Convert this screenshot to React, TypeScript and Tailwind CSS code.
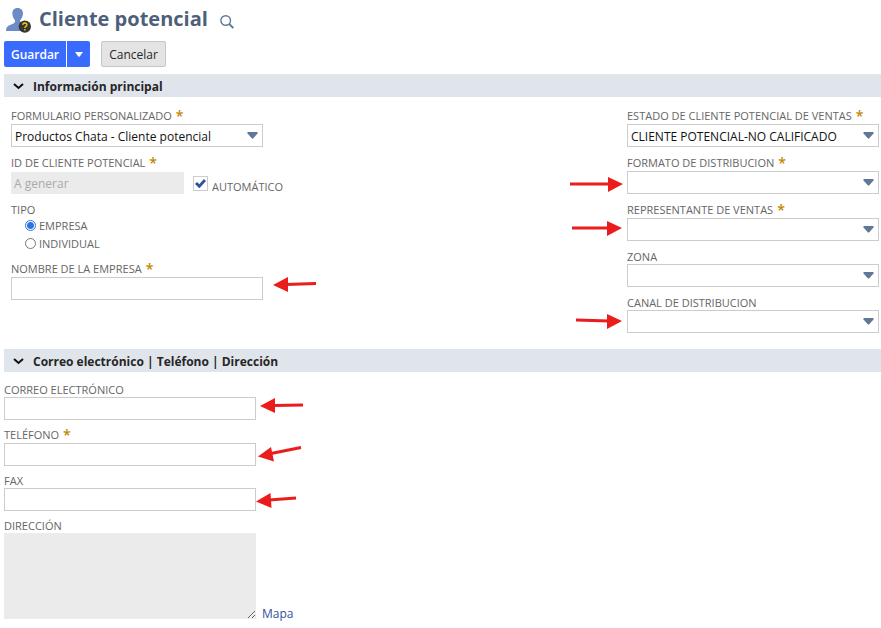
import { useState, type ReactNode } from "react";

type ArrowProps = { className: string; width: number; height: number; line: string; head: string };

function Arrow({ className, width, height, line, head }: ArrowProps) {
  return (
    <svg className={"pointer-events-none absolute " + className} width={width} height={height} viewBox={`0 0 ${width} ${height}`} aria-hidden="true">
      <path d={line} stroke="#ea1c1c" strokeWidth="3" fill="none" />
      <path d={head} fill="#ea1c1c" />
    </svg>
  );
}

function Label({ id, required, children }: { id?: string; required?: boolean; children: ReactNode }) {
  return (
    <label htmlFor={id} className={"flex text-[11px] text-[#666666] " + (required ? "h-4 leading-4" : "h-[15px] leading-[15px]")}>
      {children}
      {required && <span className="ml-1 text-[14px] leading-4 font-semibold text-[#c48500]">*</span>}
    </label>
  );
}

type FieldProps = { id: string; label: string; required?: boolean; value?: string; children?: ReactNode };

function SelectField({ id, label, required, value = "", children }: FieldProps) {
  return (
    <div className="w-[252px]">
      <Label id={id} required={required}>{label}</Label>
      <div className="relative">
        <select id={id} defaultValue={value} className="block h-[23px] w-full appearance-none border border-[#cccccc] bg-white pt-0.5 pr-6 pl-[3px] text-[12px] text-[#111111] outline-none">
          <option>{value}</option>
        </select>
        <svg className="pointer-events-none absolute top-2 right-[5px]" width="11" height="7" viewBox="0 0 11 7" aria-hidden="true">
          <path d="M1 0H10Q11 0 10.5 1.5L6.5 6Q5.5 7 4.5 6L.5 1.5Q0 0 1 0Z" fill="#607799" />
        </svg>
        {children}
      </div>
    </div>
  );
}

function TextField({ id, label, required, children }: FieldProps) {
  return (
    <div className="w-[252px]">
      <Label id={id} required={required}>{label}</Label>
      <div className="relative">
        <input id={id} type="text" className="block h-[23px] w-full border border-[#cccccc] bg-white px-1 text-[12px] outline-none" />
        {children}
      </div>
    </div>
  );
}

function SectionHeader({ children }: { children: ReactNode }) {
  return (
    <h2 className="ml-1 flex h-[23px] items-center bg-[#e0e4eb] pt-0.5 text-[12px] font-bold text-[#262626]">
      <button type="button" className="flex items-center gap-[9px] pl-[9px] leading-5">
        <svg width="11" height="7" viewBox="0 0 11 7" aria-hidden="true">
          <path d="M1 1L5.5 5L10 1" stroke="#111111" strokeWidth="2" fill="none" />
        </svg>
        {children}
      </button>
    </h2>
  );
}

function TypeOption({ label, checked, onSelect }: { label: string; checked: boolean; onSelect: () => void }) {
  return (
    <label className="flex h-[18px] items-center gap-[3px] pl-3.5 text-[11px] leading-[18px] text-[#666666]">
      <input type="radio" name="tipo" checked={checked} onChange={onSelect} className="mb-0.5 size-[11px] appearance-none rounded-full border border-[#767676] bg-white checked:border-[#2f74dd] checked:bg-[radial-gradient(circle,#2f74dd_3px,#ffffff_4px)]" />
      {label}
    </label>
  );
}

export default function App() {
  const [kind, setKind] = useState("EMPRESA");

  return (
    <main className="bg-white pb-2 font-['Open_Sans','Noto_Sans',sans-serif] text-[12px] text-[#262626]">
      <header className="flex h-[41px] items-start pt-[7px] pl-1.5">
        <svg width="26" height="26" viewBox="0 0 26 26" aria-hidden="true">
          <path d="M11.5 1C7.9 1 6.2 3.4 6.4 6.8C6.6 9.8 7.6 11.7 9 13.3C9.3 14.7 9 15.8 7.5 16.5C4.5 17.8 1 18.6 .4 21.5C.1 22.8 0 24 0 24H20V15C15.8 16.4 14 15.4 14.1 13.3C15.6 11.7 16.8 9.7 17 6.8C17.2 3.4 15.1 1 11.5 1Z" fill="#6d8cc5" />
          <circle cx="18.8" cy="19.6" r="6.2" fill="#363636" />
          <path d="M16.7 17.9Q16.9 16.1 18.9 16.1Q21 16.2 20.9 17.8Q20.8 18.7 19.8 19.4Q18.9 20 18.9 21M18.9 22.1V23.6" fill="none" stroke="#f2c500" strokeWidth="1.5" />
        </svg>
        <h1 className="ml-[7px] text-[20px] leading-6 font-bold text-[#4d5f79]">Cliente potencial</h1>
        <button type="button" aria-label="Buscar" className="mt-2 ml-3">
          <svg width="14" height="14" viewBox="0 0 14 14" fill="none" stroke="#607799" aria-hidden="true">
            <circle cx="5.7" cy="5.5" r="4.8" strokeWidth="1.4" />
            <path d="M9.2 9L13.3 13" strokeWidth="1.8" />
          </svg>
        </button>
      </header>

      <div className="mb-[7px] flex h-[26px] gap-[11px] pl-1">
        <div className="flex gap-px">
          <button type="button" className="w-[62px] rounded-l-[2px] bg-[#3a6bff] pt-0.5 text-[12px] font-semibold text-white">Guardar</button>
          <button type="button" aria-label="Más opciones" className="flex w-[23px] items-center justify-center rounded-r-[2px] bg-[#3a6bff]">
            <svg width="8" height="5" viewBox="0 0 8 5" aria-hidden="true">
              <path d="M0 0H8L4.7 4.4Q4 5 3.3 4.4Z" fill="#ffffff" />
            </svg>
          </button>
        </div>
        <button type="button" className="w-[65px] rounded-[2px] border border-[#c6c6c6] bg-[#e4e4e4] pt-0.5 text-[12px] text-[#262626]">Cancelar</button>
      </div>

      <SectionHeader>Información principal</SectionHeader>
      <section className="flex justify-between pt-[11px] pr-0.5 pb-4 pl-[11px]">
        <div className="flex flex-col gap-2">
          <SelectField id="formulario" label="FORMULARIO PERSONALIZADO" required value="Productos Chata - Cliente potencial" />
          <div>
            <Label id="cliente-id" required>ID DE CLIENTE POTENCIAL</Label>
            <div className="flex h-[23px] items-end">
              <input id="cliente-id" type="text" disabled placeholder="A generar" className="h-[22px] w-[173px] bg-[#ebebeb] px-[3px] text-[12px] placeholder:text-[#aaaaaa]" />
              <label className="ml-[9px] flex h-[22px] gap-1 text-[11px] leading-4 text-[#666666]">
                <span className="relative mt-1 size-[15px]">
                  <input type="checkbox" defaultChecked className="peer block size-[15px] appearance-none border border-[#cccccc] bg-white" />
                  <svg className="pointer-events-none absolute top-[3px] left-0.5 hidden peer-checked:block" width="11" height="9" viewBox="0 0 11 9" aria-hidden="true">
                    <path d="M1 4L4.3 7.3L10 1" stroke="#31529d" strokeWidth="2.8" fill="none" />
                  </svg>
                </span>
                <span className="mt-[7px]">AUTOMÁTICO</span>
              </label>
            </div>
          </div>
          <fieldset>
            <legend className="block h-[15px] text-[11px] leading-[15px] text-[#666666]">TIPO</legend>
            <TypeOption label="EMPRESA" checked={kind === "EMPRESA"} onSelect={() => setKind("EMPRESA")} />
            <TypeOption label="INDIVIDUAL" checked={kind === "INDIVIDUAL"} onSelect={() => setKind("INDIVIDUAL")} />
          </fieldset>
          <TextField id="empresa" label="NOMBRE DE LA EMPRESA" required>
            <Arrow className="top-0 left-[262px]" width={43} height={15} line="M13 7.5L43 6.5" head="M0 8L15 0V15Z" />
          </TextField>
        </div>

        <div className="flex flex-col gap-2">
          <SelectField id="estado" label="ESTADO DE CLIENTE POTENCIAL DE VENTAS" required value="CLIENTE POTENCIAL-NO CALIFICADO" />
          <SelectField id="formato" label="FORMATO DE DISTRIBUCION" required>
            <Arrow className="top-[5px] right-[256px]" width={53} height={16} line="M0 8H40" head="M53 8L38 1V16Z" />
          </SelectField>
          <SelectField id="representante" label="REPRESENTANTE DE VENTAS" required>
            <Arrow className="top-0.5 right-[257px]" width={50} height={16} line="M0 8H37" head="M50 8L35 1V16Z" />
          </SelectField>
          <SelectField id="zona" label="ZONA" />
          <SelectField id="canal" label="CANAL DE DISTRIBUCION">
            <Arrow className="top-[3px] right-[257px]" width={46} height={16} line="M0 7L33 8" head="M46 8L31 1V16Z" />
          </SelectField>
        </div>
      </section>

      <SectionHeader>Correo electrónico | Teléfono | Dirección</SectionHeader>
      <section className="flex flex-col gap-[7px] pt-2.5 pl-1">
        <TextField id="correo" label="CORREO ELECTRÓNICO">
          <Arrow className="top-px left-[256px]" width={43} height={15} line="M13 7.5L43 7" head="M0 8L15 0V15Z" />
        </TextField>
        <TextField id="telefono" label="TELÉFONO" required>
          <Arrow className="top-[3px] left-[254px]" width={44} height={16} line="M13 7.5L43 1.5" head="M0 10.5L13 1L16 15.5Z" />
        </TextField>
        <TextField id="fax" label="FAX">
          <Arrow className="top-[5px] left-[252px]" width={41} height={15} line="M13 7L40 5" head="M0 8.5L14.5 0L15.5 15Z" />
        </TextField>
        <div>
          <Label id="direccion">DIRECCIÓN</Label>
          <div className="flex items-end gap-1.5">
            <textarea id="direccion" readOnly className="block h-[86px] w-[252px] resize bg-[#ebebeb] outline-none" />
            <a href="#mapa" className="-mb-1 leading-[18px] text-[#31529d]">Mapa</a>
          </div>
        </div>
      </section>
    </main>
  );
}
